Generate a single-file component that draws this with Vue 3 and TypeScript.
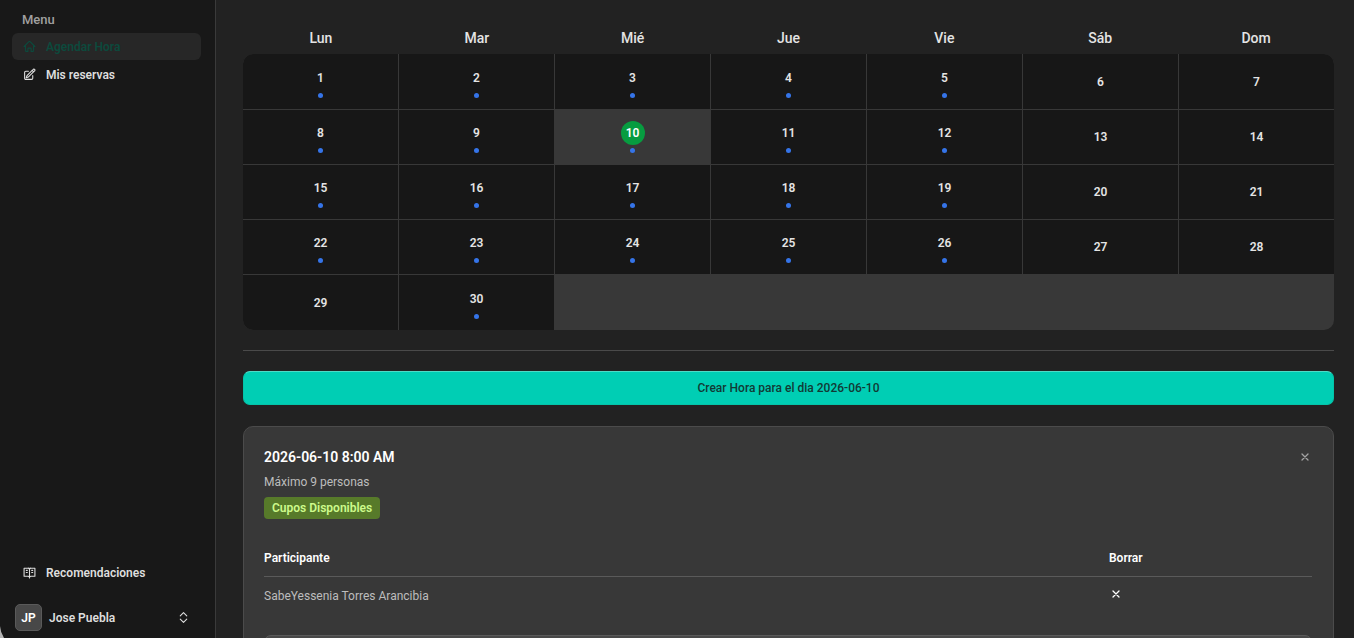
<script setup lang="ts">
interface Day {
  number: number
  available: boolean
}

const weekdays: string[] = ['Lun', 'Mar', 'Mié', 'Jue', 'Vie', 'Sáb', 'Dom']
const selectedDay = 10

const days: Day[] = Array.from({ length: 30 }, (_, i) => ({
  number: i + 1,
  available: i % 7 < 5 && i + 1 !== 29,
}))

const participants: string[] = ['SabeYessenia Torres Arancibia']
</script>

<template>
  <div class="shell">
    <aside class="sidebar">
      <nav class="nav">
        <div class="nav-label">Menu</div>
        <a href="#agendar" class="nav-link active">
          <svg viewBox="0 0 24 24" aria-hidden="true">
            <path d="m2 12 9-9a1.500 1.500 0 0 1 2 0l9 9M4.500 9.800V20a1 1 0 0 0 1 1H9v-5a1 1 0 0 1 1-1h4a1 1 0 0 1 1 1v5h3.500a1 1 0 0 0 1-1V9.800" />
          </svg>
          <span>Agendar Hora</span>
        </a>
        <a href="#reservas" class="nav-link">
          <svg viewBox="0 0 24 24" aria-hidden="true">
            <path d="m16.9 4.5 1.7-1.7a1.9 1.9 0 1 1 2.6 2.7L10.6 16.1a4.5 4.5 0 0 1-1.9 1.1L6 18l.8-2.7a4.5 4.5 0 0 1 1.1-1.900zM16.9 4.500l2.6 2.6M18 14v4.8A2.2 2.2 0 0 1 15.8 21H5.2A2.2 2.2 0 0 1 3 18.8V8.2A2.2 2.2 0 0 1 5.2 6H10" />
          </svg>
          <span>Mis reservas</span>
        </a>
      </nav>
      <div class="nav bottom">
        <a href="#recomendaciones" class="nav-link">
          <svg viewBox="0 0 24 24" aria-hidden="true">
            <path d="M12 5v17M16 12h2M16 8h2M6 12h2M6 8h2M2 4h7a3 3 0 0 1 3 2 3 3 0 0 1 3-2h7v15h-7a3 3 0 0 0-3 2 3 3 0 0 0-3-2H2z" />
          </svg>
          <span>Recomendaciones</span>
        </a>
        <button type="button" class="profile">
          <span class="avatar">JP</span>
          <span class="profile-name">Jose Puebla</span>
          <svg viewBox="0 0 24 24" aria-hidden="true">
            <path d="m6 15 6 6 6-6M6 9l6-6 6 6" />
          </svg>
        </button>
      </div>
    </aside>

    <main class="content">
      <div class="weekdays">
        <div v-for="name in weekdays" :key="name">{{ name }}</div>
      </div>
      <div class="calendar">
        <button
          v-for="day in days"
          :key="day.number"
          type="button"
          class="day"
          :class="{ selected: day.number === selectedDay }"
        >
          <span class="number">{{ day.number }}</span>
          <span v-if="day.available" class="dot"></span>
        </button>
      </div>

      <hr class="divider" />

      <button type="button" class="create">Crear Hora para el dia 2026-06-10</button>

      <section class="card">
        <header class="card-head">
          <div>
            <h2>2026-06-10 8:00 AM</h2>
            <p>Máximo 9 personas</p>
            <span class="badge">Cupos Disponibles</span>
          </div>
          <button type="button" class="close" aria-label="Cerrar">
            <svg viewBox="0 0 8 8" aria-hidden="true"><path d="M1 1l6 6M7 1L1 7" /></svg>
          </button>
        </header>
        <table class="people">
          <thead>
            <tr>
              <th>Participante</th>
              <th class="remove-col">Borrar</th>
            </tr>
          </thead>
          <tbody>
            <tr v-for="person in participants" :key="person">
              <td>{{ person }}</td>
              <td class="action">
                <button type="button" class="remove" aria-label="Borrar participante">
                  <svg viewBox="0 0 8 8" aria-hidden="true"><path d="M1 1l6 6M7 1L1 7" /></svg>
                </button>
              </td>
            </tr>
          </tbody>
        </table>
        <input type="text" class="add" aria-label="Participante" />
      </section>
    </main>
  </div>
</template>

<style>
body {
  background: #222222;
}
</style>

<style scoped>
* {
  box-sizing: border-box;
}

.shell {
  position: relative;
  display: grid;
  grid-template-columns: 216px minmax(0, 1fr);
  grid-template-rows: minmax(0, 1fr);
  height: 100vh;
  overflow: hidden;
  background: #222222;
  color: #e4e4e4;
  font-family: Roboto, "Liberation Sans", sans-serif;
  font-size: 12px;
  line-height: 16px;
}

/* Light wedge left by the rounded window corner */
.shell::after {
  content: "";
  position: absolute;
  left: 0;
  bottom: 0;
  width: 4px;
  height: 12px;
  background: #b4b4b4;
  clip-path: polygon(0 0, 30% 50%, 100% 100%, 0 100%);
}

button {
  padding: 0;
  border: 0;
  background: none;
  color: inherit;
  font: inherit;
  cursor: pointer;
}

svg {
  fill: none;
  stroke: currentColor;
  stroke-linecap: round;
  stroke-linejoin: round;
}

.sidebar {
  display: flex;
  flex-direction: column;
  justify-content: space-between;
  padding: 12px 14px 5px 12px;
  border-right: 1px solid #3a3a3a;
  background: #181818;
}

.nav {
  display: flex;
  flex-direction: column;
  gap: 1px;
}

.nav-label {
  padding: 0 10px;
  margin-bottom: 4px;
  color: #a0a0a0;
  font-size: 13px;
  font-weight: 500;
}

.nav-link {
  display: flex;
  align-items: center;
  gap: 10px;
  height: 27px;
  padding: 0 11px;
  border-radius: 6px;
  color: #dedede;
  font-weight: 600;
  text-decoration: none;
}

.nav-link svg {
  width: 13px;
  height: 13px;
  stroke-width: 2;
}

.nav-link.active {
  background: #272727;
  color: #0c4a3d;
}

.bottom {
  gap: 16px;
}

.profile {
  display: flex;
  align-items: center;
  gap: 7px;
  height: 31px;
  padding: 0 11px 0 3px;
  text-align: left;
  color: #dedede;
  font-weight: 600;
}

.avatar {
  display: grid;
  place-items: center;
  width: 27px;
  height: 27px;
  border: 1px solid #5a5a5a;
  border-radius: 5px;
  background: #484848;
  color: #ffffff;
}

.profile-name {
  flex: 1;
}

.profile svg {
  width: 13px;
  height: 13px;
  stroke-width: 2;
}

.content {
  padding: 27px 20px 0 27px;
}

.weekdays {
  display: grid;
  grid-template-columns: repeat(7, minmax(0, 1fr));
  height: 27px;
  padding-top: 3px;
  text-align: center;
  font-size: 14px;
  font-weight: 500;
}

.calendar {
  display: grid;
  grid-template-columns: repeat(7, minmax(0, 1fr));
  grid-template-rows: 55px repeat(3, 54px) 55px;
  gap: 1px;
  border-radius: 10px;
  overflow: hidden;
  background: #383838;
}

.day {
  display: flex;
  flex-direction: column;
  align-items: center;
  justify-content: center;
  gap: 3px;
  background: #171717;
  font-weight: 600;
}

.number {
  display: grid;
  place-items: center;
  width: 24px;
  height: 24px;
  border-radius: 50%;
}

.dot {
  width: 5px;
  height: 5px;
  border-radius: 50%;
  background: #3574e8;
}

.selected {
  background: #383838;
}

.selected .number {
  background: #079c40;
  color: #ffffff;
}

.divider {
  height: 1px;
  margin: 20px 0;
  border: 0;
  background: #4a4a4a;
}

.create {
  display: block;
  width: 100%;
  height: 34px;
  border: 1px solid #04c4a9;
  border-top-color: #4edbc7;
  border-radius: 7px;
  background: #00ceb4;
  color: #123a34;
  font-weight: 500;
}

.card {
  margin-top: 21px;
  padding: 20px 21px 20px 20px;
  border: 1px solid #4b4b4b;
  border-radius: 10px;
  background: #383838;
}

.card-head {
  display: flex;
  justify-content: space-between;
}

h2 {
  margin: 0;
  color: #ffffff;
  font-size: 14px;
  font-weight: 600;
  line-height: 20px;
}

p {
  margin: 7px 0;
  color: #bdbdbd;
}

.badge {
  display: block;
  width: fit-content;
  padding: 3px 8px;
  border-radius: 4px;
  background: #577a2a;
  color: #cdfa8c;
  font-weight: 600;
}

.close,
.remove {
  display: grid;
  place-items: center;
  width: 14px;
  height: 20px;
  color: #a3a3a3;
}

.close svg,
.remove svg {
  width: 8px;
  height: 8px;
  stroke-width: 1.3;
}

.remove {
  height: 16px;
  color: #ffffff;
}

.people {
  width: 100%;
  margin-top: 21px;
  border-collapse: collapse;
  text-align: left;
  table-layout: fixed;
}

th {
  height: 36px;
  padding: 0;
  border-bottom: 1px solid #5a5a5a;
  color: #ffffff;
  font-weight: 600;
}

.remove-col {
  width: 203px;
}

td {
  height: 38px;
  padding: 1px 0 0;
  color: #bdbdbd;
}

.action {
  padding-bottom: 4px;
}

.add {
  display: block;
  width: 100%;
  height: 34px;
  margin-top: 21px;
  border: 1px solid #5a5a5a;
  border-radius: 7px;
  background: #484848;
  color: inherit;
  font: inherit;
}
</style>
